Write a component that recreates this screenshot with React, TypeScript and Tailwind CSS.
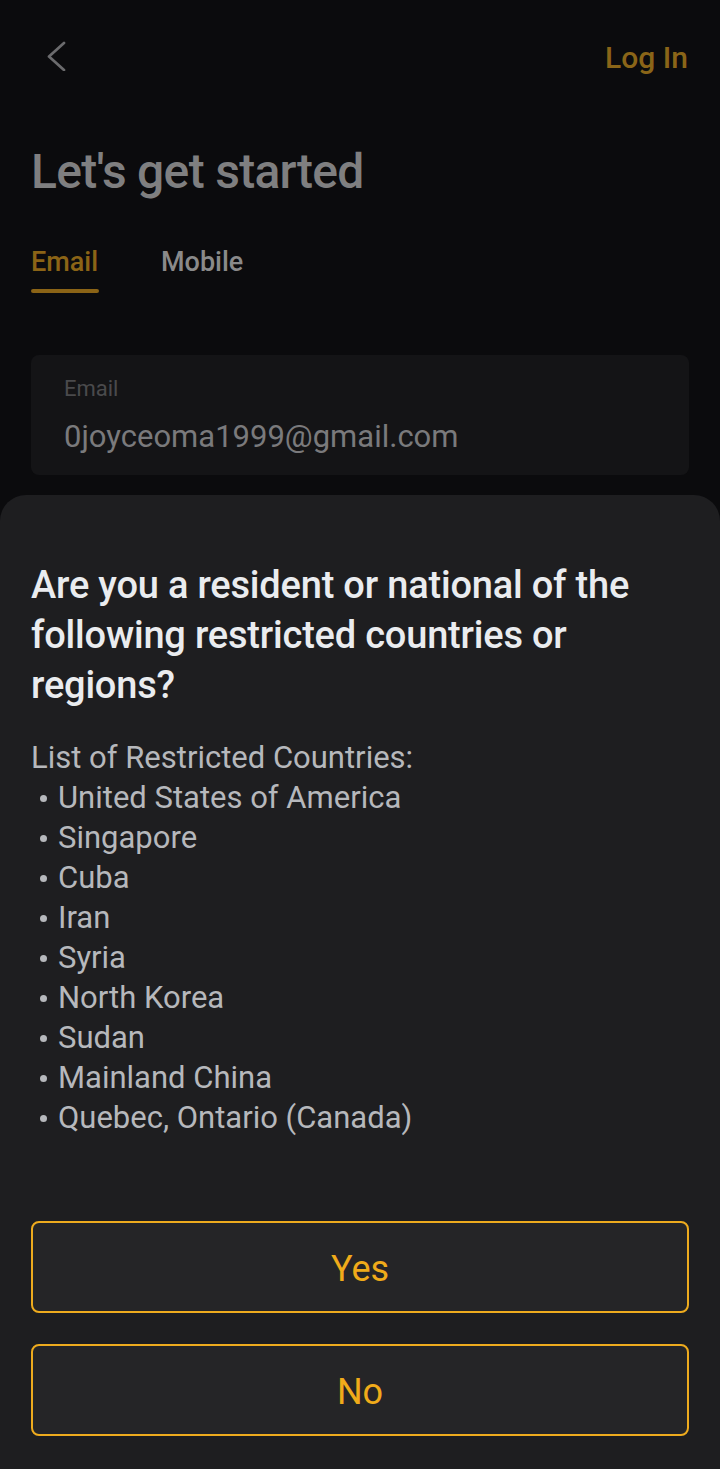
const countries = [
  'United States of America',
  'Singapore',
  'Cuba',
  'Iran',
  'Syria',
  'North Korea',
  'Sudan',
  'Mainland China',
  'Quebec, Ontario (Canada)',
]

export default function App() {
  return (
    <div className="flex h-[1469px] w-[720px] flex-col overflow-hidden bg-[#0b0b0d] font-['Roboto',sans-serif]">
      {/* dimmed page behind the sheet */}
      <div className="flex items-start justify-between pt-[40px] pr-[32px] pl-[45px]">
        <svg width="22" height="32" viewBox="0 0 22 32" className="mt-[-1px]" fill="none">
          <polyline points="19,4 4,17.5 19,31" stroke="#6b6b6d" strokeWidth="2.7" strokeLinecap="round" strokeLinejoin="round" />
        </svg>
        <span className="text-[30px] leading-[36px] font-medium text-[#8a6518]">Log In</span>
      </div>

      <h1 className="mt-[68px] px-[31px] text-[48px] leading-[56px] font-medium tracking-[-0.7px] text-[#7f7f80]">
        Let's get started
      </h1>

      <div className="mt-[45px] flex gap-[62px] px-[31px]">
        <div className="flex flex-col">
          <span className="text-[27px] leading-[34px] font-medium text-[#8b6416]">Email</span>
          <div className="mt-[10px] h-[4px] w-[68px] rounded-full bg-[#8b6416]" />
        </div>
        <span className="text-[27px] leading-[34px] font-medium text-[#8a8a8a]">Mobile</span>
      </div>

      <div className="mx-[31px] mt-[62px] flex h-[120px] flex-col rounded-[8px] bg-[#141416] px-[33px] pt-[20px]">
        <span className="text-[22px] leading-[28px] text-[#4a4a4c]">Email</span>
        <span className="mt-[15px] text-[31px] leading-[38px] text-[#7a7a7c]">0joyceoma1999@gmail.com</span>
      </div>

      {/* restricted countries sheet */}
      <div className="mt-[20px] flex flex-1 flex-col rounded-t-[26px] bg-[#1e1e20] px-[31px] pt-[65px]">
        <h2 className="text-[38px] leading-[50px] font-medium tracking-[-0.2px] text-[#eaecef]">
          Are you a resident or national of the following restricted countries or regions?
        </h2>
        <div className="mt-[28px] text-[31px] leading-[40px] text-[#b6b8bc]">
          <p>List of Restricted Countries:</p>
          {countries.map((c) => (
            <p key={c} className="flex items-center">
              <span className="mr-[11px] ml-[9px] inline-block h-[7px] w-[7px] rounded-full bg-[#b6b8bc]" />
              {c}
            </p>
          ))}
        </div>

        <div className="mt-[83px] flex flex-col gap-[31px]">
          <button className="h-[92px] w-full rounded-[8px] border-2 border-[#eeab1e] bg-[#252527] pt-[4px] text-[36px] text-[#f0ab1a]">
            Yes
          </button>
          <button className="h-[92px] w-full rounded-[8px] border-2 border-[#eeab1e] bg-[#252527] pt-[4px] text-[36px] text-[#f0ab1a]">
            No
          </button>
        </div>
      </div>
    </div>
  )
}
